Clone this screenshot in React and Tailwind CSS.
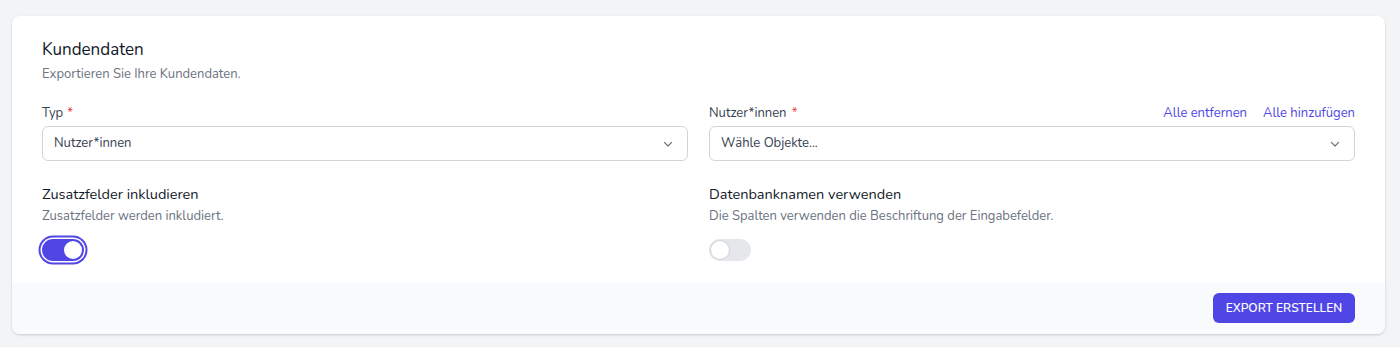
import React from "react";

function Chevron() {
  return (
    <svg width="16" height="16" viewBox="0 0 20 20" fill="none" stroke="#6b7280" strokeWidth="1.5" strokeLinecap="round" strokeLinejoin="round">
      <path d="M5.5 8l4.5 4.5L14.5 8" />
    </svg>
  );
}

function Toggle({ on }) {
  return (
    <button
      className={
        "relative inline-flex h-[22px] w-[42px] items-center rounded-full " +
        (on
          ? "bg-[#4f46e5] ring-2 ring-[#4f46e5] ring-offset-[1.5px] ring-offset-white"
          : "bg-[#e5e7eb]")
      }
    >
      <span
        className={
          "absolute top-[2px] h-[18px] w-[18px] rounded-full bg-white " +
          (on ? "left-[22px]" : "left-[2px] shadow-[0_0_0_1px_#d1d5db]")
        }
      />
    </button>
  );
}

function Select({ value }) {
  return (
    <div className="flex h-[35px] items-center justify-between rounded-md border border-[#d1d5db] bg-white pl-[11px] pr-[11px]">
      <span className="text-[13px] text-[#374151]">{value}</span>
      <Chevron />
    </div>
  );
}

export default function App() {
  return (
    <div
      className="min-h-[347px] bg-[#f3f4f6] pl-3 pr-[15px] pt-4"
      style={{ fontFamily: "Nunito, Lato, 'Noto Sans', sans-serif" }}
    >
      <div className="overflow-hidden rounded-lg bg-white shadow-[0_1px_3px_rgba(0,0,0,0.12),0_1px_2px_rgba(0,0,0,0.06)]">
        <div className="px-[30px] pt-5 pb-[21px]">
          <h2 className="text-[17px] leading-7 text-[#111827]">Kundendaten</h2>
          <p className="text-[13px] leading-5 text-[#6b7280]">Exportieren Sie Ihre Kundendaten.</p>

          <div className="mt-5 grid grid-cols-2 gap-x-[21px]">
            <div>
              <div className="flex h-5 items-center text-[13px] text-[#374151]">
                Typ <span className="ml-1 text-[#ef4444]">*</span>
              </div>
              <div className="mt-[2px]">
                <Select value="Nutzer*innen" />
              </div>
            </div>
            <div>
              <div className="flex h-5 items-center justify-between text-[13px]">
                <span className="text-[#374151]">
                  Nutzer*innen <span className="ml-0.5 text-[#ef4444]">*</span>
                </span>
                <span className="flex gap-4 text-[#4f46e5]">
                  <span>Alle entfernen</span>
                  <span>Alle hinzufügen</span>
                </span>
              </div>
              <div className="mt-[2px]">
                <Select value="Wähle Objekte..." />
              </div>
            </div>

            <div className="mt-[22px]">
              <div className="text-[14.5px] leading-[23px] text-[#111827]">Zusatzfelder inkludieren</div>
              <div className="text-[13px] leading-5 text-[#6b7280]">Zusatzfelder werden inkludiert.</div>
              <div className="mt-[13px] flex">
                <Toggle on />
              </div>
            </div>
            <div className="mt-[22px]">
              <div className="text-[14.5px] leading-[23px] text-[#111827]">Datenbanknamen verwenden</div>
              <div className="text-[13px] leading-5 text-[#6b7280]">
                Die Spalten verwenden die Beschriftung der Eingabefelder.
              </div>
              <div className="mt-[13px] flex">
                <Toggle on={false} />
              </div>
            </div>
          </div>
        </div>
        <div className="flex justify-end bg-[#f9fafb] px-[30px] py-[11px]">
          <button className="h-[30px] w-[142px] rounded-md bg-[#4f46e5] text-[12px] font-semibold text-white">
            EXPORT ERSTELLEN
          </button>
        </div>
      </div>
    </div>
  );
}
